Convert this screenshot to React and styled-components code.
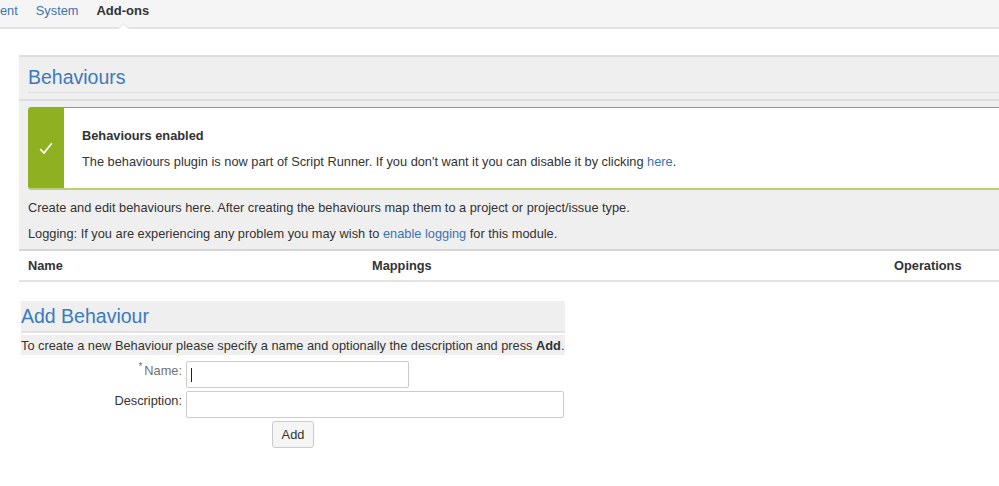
import React from "react";
import styled, { createGlobalStyle } from "styled-components";

const Global = createGlobalStyle`
  html, body { margin: 0; padding: 0; background: #fff; }
  body { width: 999px; height: 486px; overflow: hidden; font: 12.8px/20px "Liberation Sans", Arial, sans-serif; color: #333; }
  a { color: #3b73af; text-decoration: none; }
`;
const Page = styled.div`display: flex; flex-direction: column; width: 999px; height: 486px; overflow: hidden;`;
const TopBar = styled.nav`
  position: relative; box-sizing: border-box; height: 29px; flex: none; background: #f5f5f5;
  border-bottom: 2px solid #e3e3e3; display: flex; gap: 18px; padding: 0; line-height: 21px; font-size: 12.8px;
`;
const Tab = styled.a`color: ${p => (p.$active ? "#333" : "#3b73af")}; font-weight: ${p => (p.$active ? 700 : 400)}; font-size: ${p => (p.$active ? "13px" : "12.8px")};`;
const Notch = styled.span`
  position: absolute; left: 116px; bottom: -2px; width: 14px; height: 7px; overflow: hidden;
  &::after { content: ""; position: absolute; left: 2px; top: 3px; width: 9px; height: 9px; background: #fff; border: 1px solid #e3e3e3; transform: rotate(45deg); }
`;
const Panel = styled.section`
  margin: 26px 0 0 19px; flex: none; width: 980px; background: #efefef; border-top: 2px solid #dedede;
`;
const PanelHead = styled.div`padding: 0 0 6px 9px; border-bottom: 2px solid #dcdcdc;`;
const Title = styled.h1`
  margin: 0; font-weight: 400; font-size: 19.5px; line-height: 24px; color: #3b7abd;
  padding: 8px 0 4px; border-bottom: 1px solid #dedede; height: 36px; box-sizing: border-box;
`;
const Message = styled.div`
  display: flex; margin: 6px 0 0 9px; height: 83px; box-sizing: border-box; background: #fff;
  border-top: 1px solid #91b01f; border-bottom: 2px solid #b8cf78; border-radius: 3px 0 0 3px; overflow: hidden;
`;
const MessageIcon = styled.div`
  flex: none; width: 36px; background: #8eb021; display: flex; align-items: center; justify-content: center;
`;
const MessageBody = styled.div`padding: 18px 0 0 18px; line-height: 20px;`;
const MessageTitle = styled.div`font-weight: 700; margin-bottom: 6px; color: #333;`;
const MessageText = styled.div``;
const Intro = styled.p`margin: 0; padding: ${p => p.$pad}; line-height: 20px;`;
const Table = styled.div`
  display: grid; grid-template-columns: 344px 522px 1fr; height: 33px; box-sizing: border-box; background: #fff;
  align-items: center; padding-left: 9px; border-top: 2px solid #d6d6d6; border-bottom: 2px solid #e3e3e3; font-weight: 700;
`;
const Cell = styled.div``;
const AddSection = styled.section`margin: 19px 0 0 21px; width: 544px; flex: none;`;
const AddHead = styled.h2`
  margin: 0; height: 32px; box-sizing: border-box; background: #efefef; border-bottom: 2px solid #e2e2e2;
  font-weight: 400; font-size: 19.5px; line-height: 31px; color: #3b7abd;
`;
const Desc = styled.p`margin: 2px 0 0; height: 20px; box-sizing: border-box; padding-top: 1px; background: #efefef; line-height: 19px; white-space: nowrap;`;
const Form = styled.div`display: flex; flex-direction: column; gap: 3px; margin-top: 6px;`;
const Row = styled.div`display: flex; gap: 4px; align-items: flex-start;`;
const Label = styled.label`
  width: 161px; text-align: right; line-height: 20px; color: ${p => (p.$muted ? "#707070" : "#333")};
`;
const Star = styled.sup`font-size: 10px; line-height: 0; margin-right: 2px;`;
const Field = styled.div`
  position: relative; box-sizing: border-box; height: 27px; width: ${p => p.$w}px; border: 1px solid #ccc; border-radius: 2px; background: #fff;
`;
const Caret = styled.span`position: absolute; left: 4px; top: 6px; width: 1px; height: 14px; background: #222;`;
const AddButton = styled.button`
  margin: 0 0 0 251px; width: 42px; height: 27px; box-sizing: border-box; padding: 0; border: 1px solid #ccc; border-radius: 3px;
  background: #f5f5f5; font: 12.8px "Liberation Sans", Arial, sans-serif; color: #333;
`;

export default function App() {
  return (
    <Page>
      <Global />
      <TopBar>
        <Tab>ent</Tab>
        <Tab>System</Tab>
        <Tab $active>Add-ons</Tab>
        <Notch />
      </TopBar>
      <Panel>
        <PanelHead><Title>Behaviours</Title></PanelHead>
        <Message>
          <MessageIcon>
            <svg width="14" height="13" viewBox="0 0 14 13" fill="none"><path d="M1.2 7.2 5 11 12.8 1.2" stroke="#fff" strokeWidth="1.7" /></svg>
          </MessageIcon>
          <MessageBody>
            <MessageTitle>Behaviours enabled</MessageTitle>
            <MessageText>The behaviours plugin is now part of Script Runner. If you don't want it you can disable it by clicking <a>here</a>.</MessageText>
          </MessageBody>
        </Message>
        <Intro $pad="8px 0 0 9px">Create and edit behaviours here. After creating the behaviours map them to a project or project/issue type.</Intro>
        <Intro $pad="6px 0 5px 9px">Logging: If you are experiencing any problem you may wish to <a>enable logging</a> for this module.</Intro>
        <Table>
          <Cell>Name</Cell>
          <Cell>Mappings</Cell>
          <Cell>Operations</Cell>
        </Table>
      </Panel>
      <AddSection>
        <AddHead>Add Behaviour</AddHead>
        <Desc>To create a new Behaviour please specify a name and optionally the description and press <b>Add</b>.</Desc>
        <Form>
          <Row>
            <Label $muted><Star>*</Star>Name:</Label>
            <Field $w={223}><Caret /></Field>
          </Row>
          <Row>
            <Label>Description:</Label>
            <Field $w={378} />
          </Row>
          <AddButton>Add</AddButton>
        </Form>
      </AddSection>
    </Page>
  );
}
